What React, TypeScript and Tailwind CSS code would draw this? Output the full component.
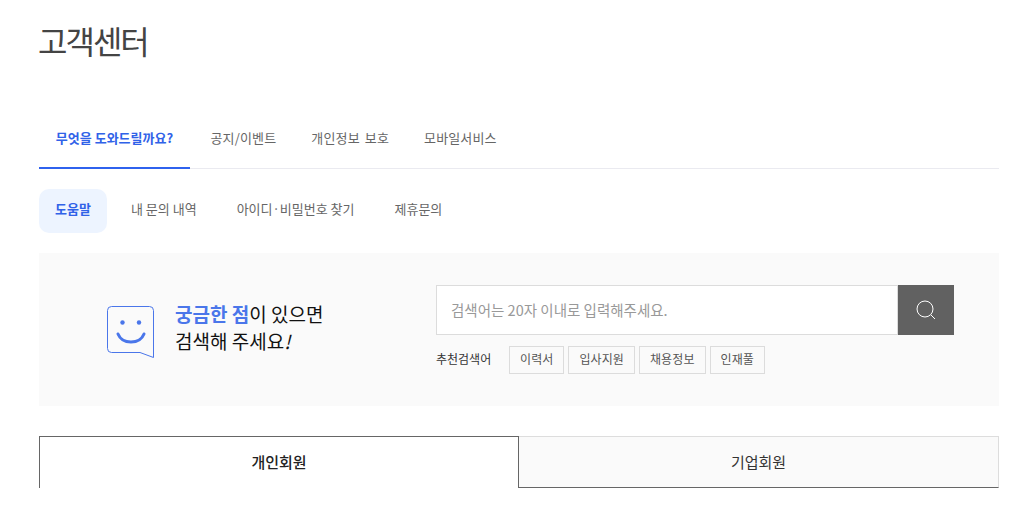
import React from 'react';

const mainTabs = ['공지/이벤트', '개인정보 보호', '모바일서비스'];
const subTabs = ['내 문의 내역', '아이디·비밀번호 찾기', '제휴문의'];
const keywords = ['이력서', '입사지원', '채용정보', '인재풀'];

const App: React.FC = () => {
    return (
        <div className="w-[1014px] h-[510px] overflow-hidden bg-white font-['Noto_Sans_CJK_KR','Noto_Sans',sans-serif]">
            <div className="ml-[39px] w-[960px]">
                <h1 className="pt-[17px] h-[114px] text-[32px] leading-[46px] font-normal text-[#444] tracking-[-2px] -ml-px">고객센터</h1>

                <div className="flex h-[55px] border-b border-[#eaeaf0]">
                    <div className="flex w-[151px] h-[55px] pb-[6px] items-center justify-center border-b-2 border-[#2f62ee] text-[13px] font-bold text-[#3062e8]">무엇을 도와드릴까요?</div>
                    <div className="flex ml-[3px]">
                        {mainTabs.map((tab) => (
                            <div key={tab} className="flex h-[54px] pb-[6px] px-[17.500px] items-center text-[13px] tracking-[0.150px] [word-spacing:2px] text-[#666]">{tab}</div>
                        ))}
                    </div>
                </div>

                <div className="flex mt-[20px] h-[44px] items-center">
                    <div className="flex w-[68px] h-[44px] pb-[5px] items-center justify-center rounded-[10px] bg-[#edf4ff] text-[13px] font-bold text-[#3062e8]">도움말</div>
                    <div className="flex ml-[4px]">
                        {subTabs.map((tab) => (
                            <div key={tab} className="px-[20px] pb-[5px] text-[13px] text-[#666]">{tab}</div>
                        ))}
                    </div>
                </div>

                <div className="flex mt-[20px] h-[153px] bg-[#fafafa]">
                    <div className="flex w-[397px] pl-[68px] pt-[47px] gap-[20px]">
                        <svg width="48" height="54" viewBox="0 0 48 54" fill="none" className="mt-[6px] shrink-0">
                            <path d="M4.500 .5H42.500A4 4 0 0 1 46.500 4.500V51.500L33 46.500H4.500A4 4 0 0 1 .5 42.500V4.500A4 4 0 0 1 4.500 .5Z" stroke="#4a76ea" />
                            <circle cx="15.500" cy="16.500" r="2.200" fill="#4a76ea" />
                            <circle cx="32" cy="16.500" r="2.200" fill="#4a76ea" />
                            <path d="M11 28C13 33 18 36 24 36C30 36 35 33 37 28" stroke="#4a76ea" strokeWidth="3" strokeLinecap="round" />
                        </svg>
                        <p className="text-[19px] leading-[27px] text-[#111]">
                            <span className="font-bold text-[#4a76ea]">궁금한 점</span>이 있으면
                            <br />
                            검색해 주세요<em>!</em>
                        </p>
                    </div>
                    <div className="w-[518px] pt-[32px]">
                        <div className="flex h-[50px]">
                            <input
                                readOnly
                                placeholder="검색어는 20자 이내로 입력해주세요."
                                className="flex-1 min-w-0 px-[14px] border border-[#dcdcdc] bg-white text-[14.500px] placeholder:text-[#999] outline-none"
                            />
                            <button type="button" className="flex w-[56px] items-center justify-center bg-[#616161]">
                                <svg width="20" height="20" viewBox="0 0 20 20" fill="none" stroke="#fff" strokeWidth="1">
                                    <circle cx="9" cy="9" r="8" />
                                    <path d="M15 15L19 19" />
                                </svg>
                            </button>
                        </div>
                        <div className="flex mt-[11px] items-center">
                            <span className="w-[73px] pb-[2px] text-[12px] text-[#333]">추천검색어</span>
                            <div className="flex gap-[4px]">
                                {keywords.map((keyword) => (
                                    <span key={keyword} className="flex h-[28px] px-[10px] pb-[2px] items-center border border-[#dcdcdc] text-[12px] tracking-[0.100px] text-[#555]">{keyword}</span>
                                ))}
                            </div>
                        </div>
                    </div>
                </div>

                <div className="flex mt-[30px] h-[52px]">
                    <div className="flex w-[480px] items-center justify-center border-t border-l border-r border-[#666] bg-white text-[15px] font-medium text-[#222]">개인회원</div>
                    <div className="flex w-[480px] items-center justify-center border-t border-r border-t-[#ddd] border-r-[#ddd] border-b border-b-[#666] bg-[#fafafa] text-[15px] text-[#333]">기업회원</div>
                </div>
            </div>
        </div>
    );
};

export default App;
